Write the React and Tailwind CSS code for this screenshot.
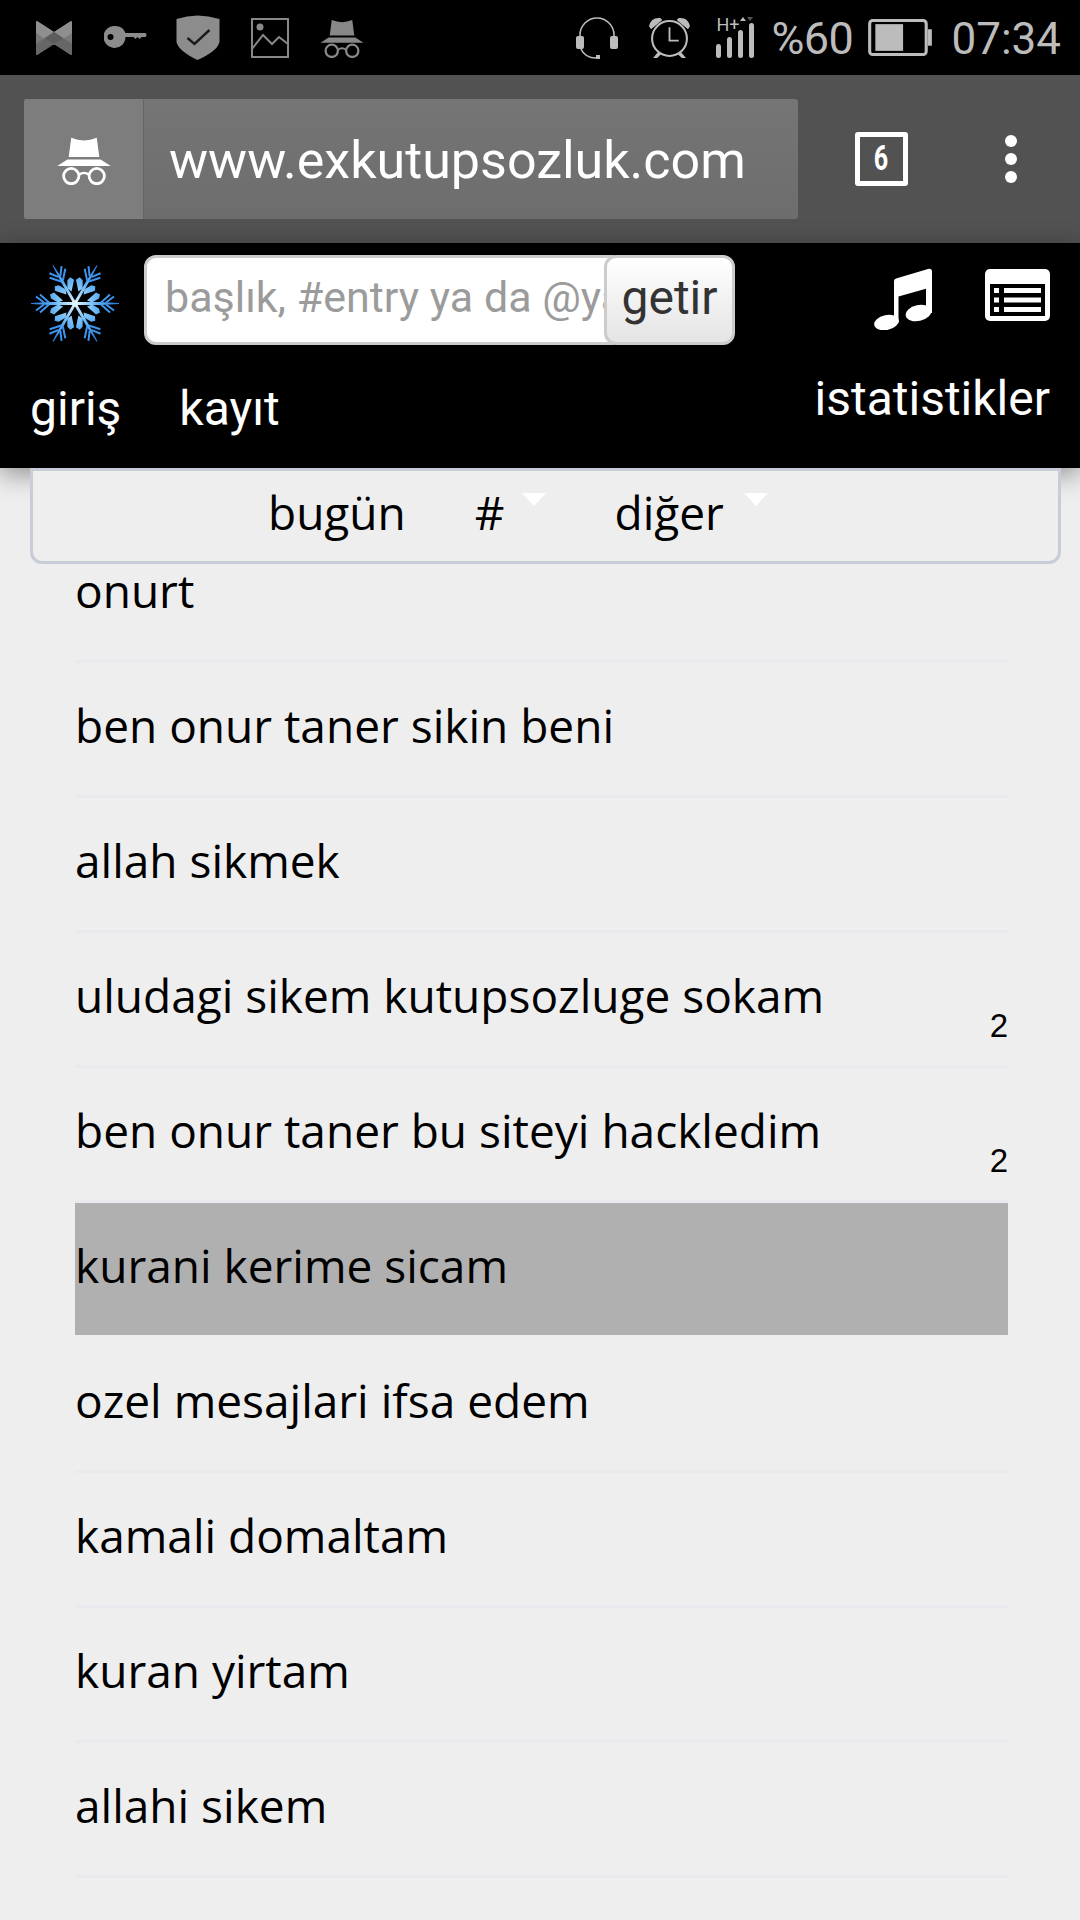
const topics = [
  { title: 'ben onur taner sikin beni' },
  { title: 'allah sikmek' },
  { title: 'uludagi sikem kutupsozluge sokam', count: 2 },
  { title: 'ben onur taner bu siteyi hackledim', count: 2 },
  { title: 'kurani kerime sicam', selected: true },
  { title: 'ozel mesajlari ifsa edem' },
  { title: 'kamali domaltam' },
  { title: 'kuran yirtam' },
  { title: 'allahi sikem' },
]

function Incognito({ className, color }) {
  return (
    <svg className={className} viewBox="0 0 42 40" fill="none">
      <path d="M9 18 L11 3 Q16 5 21 5 Q26 5 31 3 L33 18 Z" fill={color} />
      <path d="M8 20 H34 L42 25 H0 Z" fill={color} />
      <circle cx="11" cy="33" r="6" stroke={color} strokeWidth="2.2" />
      <circle cx="31" cy="33" r="6" stroke={color} strokeWidth="2.2" />
      <path d="M17 32 Q21 29 25 32" stroke={color} strokeWidth="1.8" />
    </svg>
  )
}

function StatusLeft() {
  return (
    <div className="flex items-center">
      <svg className="ml-[36px] w-[36px] h-[36px]" viewBox="0 0 36 36">
        <path d="M1 1 L18 12 L35 1 Q36 1 36 3 V33 Q36 35 35 35 L18 24 L1 35 Q0 35 0 33 V3 Q0 1 1 1 Z" fill="#787878" />
        <path d="M1 1 L18 12 L35 1 Q36 1 36 3 V13 L18 25 L0 13 V3 Q0 1 1 1 Z" fill="#8f8f8f" />
        <path d="M0 24 L18 12 L36 24 V33 Q36 35 35 35 L18 24 L1 35 Q0 35 0 33 Z" fill="#676767" />
        <path d="M18 12 L27 18 L18 24 L9 18 Z" fill="#5c5c5c" />
      </svg>
      <svg className="ml-[32px] w-[44px] h-[23px]" viewBox="0 0 43 23">
        <path d="M11 0 A11 11 0 0 1 21 7 H41 Q43 9 41 11 H37 L35 13 L33 11 L31 13 L29 11 H21 A11 11 0 1 1 11 0 Z" fill="#8c8c8c" />
        <circle cx="6" cy="11" r="3" fill="#000000" />
      </svg>
      <svg className="ml-[28px] w-[44px] h-[45px]" viewBox="0 0 43 45">
        <path d="M0 4 Q21 -3 43 4 V27 Q41 36 21 45 Q2 36 0 27 Z" fill="#8c8c8c" />
        <path d="M11 23 L18 29 L33 15" fill="none" stroke="#1a1a1a" strokeWidth="2.4" />
      </svg>
      <svg className="ml-[30px] w-[40px] h-[40px]" viewBox="0 0 38 40" fill="none">
        <rect x="1" y="1" width="36" height="38" stroke="#888888" strokeWidth="2" />
        <circle cx="9" cy="9" r="3.5" fill="#888888" />
        <path d="M1 31 L12 17 L21 26 L28 19 L37 26" stroke="#888888" strokeWidth="2" />
      </svg>
      <Incognito className="ml-[30px] w-[44px] h-[41px]" color="#888888" />
    </div>
  )
}

function StatusRight() {
  return (
    <div className="flex items-center text-[#bcbcbc] font-['Roboto',sans-serif]">
      <svg className="w-[42px] h-[44px]" viewBox="0 0 42 44" fill="none">
        <path d="M4 24 V19 A17 17 0 0 1 38 19 V24" stroke="#bcbcbc" strokeWidth="1.6" />
        <rect x="0" y="20" width="8" height="13" rx="2" fill="#bcbcbc" />
        <rect x="34" y="20" width="8" height="13" rx="2" fill="#bcbcbc" />
        <path d="M5 33 Q9 42 20 42" stroke="#bcbcbc" strokeWidth="1.6" />
        <rect x="20" y="39" width="4" height="4" fill="#bcbcbc" />
      </svg>
      <svg className="ml-[31px] w-[41px] h-[41px]" viewBox="0 0 40 40" fill="none">
        <circle cx="20" cy="21" r="17" stroke="#bcbcbc" strokeWidth="2" />
        <path d="M20 10 V23 H29" stroke="#bcbcbc" strokeWidth="1.8" />
        <path d="M0 9 Q2 0 11 1 L13 3 L2 12 Z M40 9 Q38 0 29 1 L27 3 L38 12 Z" fill="#bcbcbc" />
        <path d="M9 34 L4 40 H8 L12 36 Z M31 34 L36 40 H32 L28 36 Z" fill="#bcbcbc" />
      </svg>
      <div className="relative ml-[26px] w-[38px] h-[43px]">
        <span className="absolute left-0 top-0 text-[18px] leading-[17px] font-['Roboto',sans-serif]">H+</span>
        <svg className="absolute inset-0 w-[38px] h-[43px]" viewBox="0 0 38 43">
          <path d="M24 5 L27 1 L30 5 Z" fill="#bcbcbc" />
          <path d="M31 1 L37 1 L34 5 Z" fill="#555555" />
          <rect x="0" y="28" width="5" height="14" rx="2.5" fill="#bcbcbc" />
          <rect x="11" y="21" width="5" height="21" rx="2.5" fill="#bcbcbc" />
          <rect x="22" y="14" width="5" height="28" rx="2.5" fill="#bcbcbc" />
          <rect x="33" y="7" width="5" height="35" rx="2.5" fill="#bcbcbc" />
        </svg>
      </div>
      <span className="ml-[17px] mt-[3px] text-[45px] leading-[50px] tracking-[-0.5px]">%60</span>
      <svg className="ml-[15px] w-[64px] h-[37px]" viewBox="0 0 62 36" fill="none">
        <rect x="1.5" y="1.5" width="55" height="33" rx="3" stroke="#bcbcbc" strokeWidth="3" />
        <rect x="7" y="5" width="27" height="26" fill="#bcbcbc" />
        <rect x="58" y="10" width="4" height="16" fill="#bcbcbc" />
      </svg>
      <span className="ml-[19px] mt-[3px] text-[44px] leading-[50px]">07:34</span>
    </div>
  )
}

function Snowflake() {
  const arms = [0, 60, 120, 180, 240, 300]
  return (
    <svg className="w-[88px] h-[77px]" viewBox="-44 -38.5 88 77" fill="none">
      <defs>
        <linearGradient id="flake" gradientUnits="userSpaceOnUse" x1="0" y1="0" x2="40" y2="0">
          <stop offset="0" stopColor="#e0f6ff" />
          <stop offset="0.5" stopColor="#6bb8f8" />
          <stop offset="1" stopColor="#2f7fe0" />
        </linearGradient>
      </defs>
      {arms.map(a => (
        <g key={a} transform={`rotate(${a})`}>
          <path d="M0 -1.4 L26 -1.4 L44 -0.5 V0.5 L26 1.4 L0 1.4 Z" fill="url(#flake)" />
          <path d="M12 -3 L21 -11 L25 -9 L24 -5 L17 -1 Z M12 3 L21 11 L25 9 L24 5 L17 1 Z" fill="url(#flake)" />
          <path d="M26 -1 L35 -9 M26 1 L35 9 M31 -1 L39 -7 M31 1 L39 7" stroke="#3d94ee" strokeWidth="2" />
        </g>
      ))}
      <circle r="3" fill="#e0f6ff" />
    </svg>
  )
}

export default function App() {
  return (
    <div className="w-[1080px] h-[1920px] overflow-hidden bg-[#eeeeee] font-['Open_Sans',sans-serif]">
      <div className="h-[75px] bg-black flex items-center justify-between pr-[19px]">
        <StatusLeft />
        <StatusRight />
      </div>

      <div className="h-[168px] bg-[#525252] flex items-center pl-[24px] font-['Roboto',sans-serif]">
        <div className="w-[774px] h-[120px] flex rounded-[3px] overflow-hidden bg-gradient-to-b from-[#757575] to-[#6d6d6d]">
          <div className="w-[120px] flex items-center justify-center bg-[#7d7d7d] border-r border-[#666666]">
            <Incognito className="w-[54px] h-[51px]" color="#ffffff" />
          </div>
          <div className="flex-1 flex items-center pl-[25px] pt-[3px] text-white text-[52px]">www.exkutupsozluk.com</div>
        </div>
        <div className="ml-[57px] w-[53px] h-[54px] border-[5px] border-white rounded-[3px] flex items-center justify-center text-white text-[35px] font-bold">
          <span className="inline-block scale-x-[0.72]">6</span>
        </div>
        <div className="ml-[97px] flex flex-col gap-[6px]">
          <span className="w-3 h-3 rounded-full bg-white" />
          <span className="w-3 h-3 rounded-full bg-white" />
          <span className="w-3 h-3 rounded-full bg-white" />
        </div>
      </div>

      <div className="relative h-[225px] bg-black shadow-[0_6px_24px_rgba(0,0,0,0.4)] font-['Roboto',sans-serif]">
        <div className="flex items-start pt-[12px] pl-[31px] pr-[30px]">
          <div className="mt-[10px]"><Snowflake /></div>
          <div className="ml-[25px] flex">
            <input
              className="w-[470px] h-[90px] pl-[18px] pb-[6px] rounded-l-[12px] bg-white border-[3px] border-[#cccccc] text-[43px] outline-none placeholder:text-[#9b9b9b]"
              placeholder="başlık, #entry ya da @yazar"
              readOnly
            />
            <button className="-ml-[10px] relative w-[131px] h-[90px] pb-[4px] rounded-[12px] border-[3px] border-[#cccccc] bg-gradient-to-b from-white to-[#e4e4e4] text-[#333333] text-[48px]">getir</button>
          </div>
          <svg className="ml-auto mt-[13px] w-[58px] h-[62px]" viewBox="0 0 58 62" fill="#ffffff">
            <path d="M20 13 Q20 11 22 10.5 L54 1 Q58 0 58 4 V45 H52 V20.7 L24.5 28.5 V55 H20 Z" />
            <ellipse cx="44.5" cy="45" rx="13" ry="8" transform="rotate(-12 44.5 45)" />
            <ellipse cx="12.5" cy="54.5" rx="12.5" ry="7.5" transform="rotate(-12 12.5 54.5)" />
          </svg>
          <svg className="ml-[53px] mt-[14px] w-[65px] h-[52px]" viewBox="0 0 65 52" fill="#ffffff">
            <rect width="65" height="52" rx="5" />
            <rect x="5" y="15" width="55" height="32" fill="#000000" />
            <rect x="9" y="19" width="5" height="5" /><rect x="19" y="19" width="37" height="5" />
            <rect x="9" y="28.5" width="5" height="5" /><rect x="19" y="28.5" width="37" height="5" />
            <rect x="9" y="38" width="5" height="5" /><rect x="19" y="38" width="37" height="5" />
          </svg>
        </div>
        <div className="flex items-start justify-between pl-[30px] pr-[30px] mt-[26px] text-white text-[48px] leading-[56px]">
          <div className="flex gap-[58px] mt-[10px]">
            <span>giriş</span>
            <span>kayıt</span>
          </div>
          <span>istatistikler</span>
        </div>
      </div>

      <div className="relative mx-[30px] w-[1031px] h-[96px] flex items-center pl-[235px] pb-[8px] border-[3px] border-[#c8ccd8] rounded-b-[12px] text-[46px] text-black bg-[#eeeeee]">
        <span>bugün</span>
        <span className="ml-[69px]">#</span>
        <span className="ml-[18px] mb-[26px] w-0 h-0 border-x-[12px] border-x-transparent border-t-[13px] border-t-white" />
        <span className="ml-[68px]">diğer</span>
        <span className="ml-[20px] mb-[26px] w-0 h-0 border-x-[12px] border-x-transparent border-t-[13px] border-t-white" />
      </div>

      <div className="mx-[75px] w-[933px] text-[46px] text-black">
        <div className="h-[99px] pb-[2px] border-b-[3px] border-[#e9e9ee] leading-[52px]">onurt</div>
        {topics.map(t => (
          <div
            key={t.title}
            className={t.selected
              ? 'relative h-[135px] pt-[34px] leading-[56px] bg-[#b0b0b0] border-b-[3px] border-[#eeeeee]'
              : 'relative h-[135px] pt-[34px] leading-[56px] border-b-[3px] border-[#e9e9ee]'}
          >
            {t.title}
            {t.count && (
              <span className="absolute right-0 bottom-[21px] text-[33px] leading-[36px] font-['Liberation_Sans',sans-serif]">{t.count}</span>
            )}
          </div>
        ))}
      </div>
    </div>
  )
}
